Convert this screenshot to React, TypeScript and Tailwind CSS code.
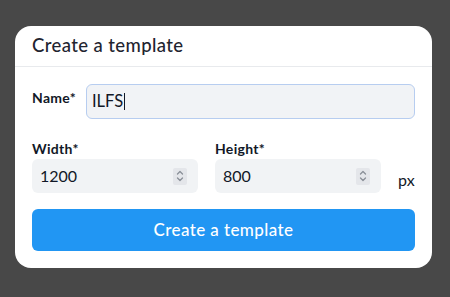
import React from "react";

function Spinner() {
  return (
    <div className="flex h-[17px] w-[14px] items-center justify-center rounded-[2px] bg-[#e4e6ea]">
      <svg width="10" height="14" viewBox="0 0 10 14" fill="none" stroke="#8a8f98" strokeWidth="1.3" strokeLinecap="round" strokeLinejoin="round">
        <path d="M2.5 5 L5 2.5 L7.5 5" />
        <path d="M2.5 9 L5 11.5 L7.5 9" />
      </svg>
    </div>
  );
}

function NumField({ label, value }: { label: string; value: string }) {
  return (
    <div className="flex flex-col">
      <div className="h-[19px] text-[14px] font-bold leading-[19px] tracking-[0.3px] text-[#111827]">{label}</div>
      <div className="mt-[1px] flex h-[34px] items-center justify-between rounded-[6px] bg-[#f1f3f5] pl-[8px] pr-[11px]">
        <span className="text-[16px] text-[#111827]">{value}</span>
        <Spinner />
      </div>
    </div>
  );
}

export default function App() {
  return (
    <div
      className="flex h-[297px] w-[450px] items-start bg-[#484848] pl-[15px] pt-[26px]"
      style={{ fontFamily: "Lato, 'Noto Sans', sans-serif" }}
    >
      <div className="w-[417px] rounded-[16px] bg-white">
        <div className="flex h-[41px] items-center border-b border-[#e8eaed] px-[17px]">
          <span className="text-[18.5px] font-medium tracking-[0.4px] text-[#1f2430]">Create a template</span>
        </div>
        <div className="px-[17px] pb-[17px] pt-[17px]">
          <div className="flex items-start">
            <div className="w-[54px] pt-[3px] text-[14px] font-bold tracking-[0.3px] text-[#111827]">Name*</div>
            <div className="flex h-[35px] flex-1 items-center rounded-[6px] border border-[#b7cdf0] bg-[#f1f3f6] pl-[5px]">
              <span className="text-[16.5px] text-[#111827]">ILFS</span>
              <span className="ml-[1px] h-[17px] w-[1px] bg-[#111827]" />
            </div>
          </div>
          <div className="mt-[20px] grid grid-cols-[166px_166px_auto] items-end gap-x-[17px]">
            <NumField label="Width*" value="1200" />
            <NumField label="Height*" value="800" />
            <div className="flex h-[34px] items-center pt-[8px] text-[16px] text-[#111827]">px</div>
          </div>
          <button className="mt-[16px] flex h-[42px] w-full items-center justify-center rounded-[6px] bg-[#2196f3] text-[17px] font-medium tracking-[0.4px] text-white">
            Create a template
          </button>
        </div>
      </div>
    </div>
  );
}
